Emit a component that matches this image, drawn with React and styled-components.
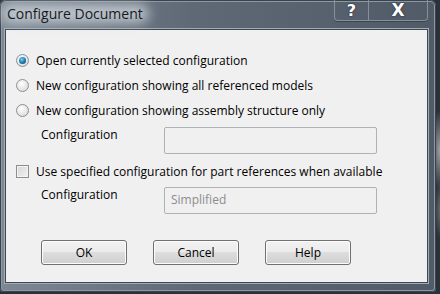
import React from "react";
import styled, { createGlobalStyle } from "styled-components";

const Global = createGlobalStyle`
  html, body {
    margin: 0;
    padding: 0;
    width: 440px;
    height: 294px;
    overflow: hidden;
    background:
      radial-gradient(ellipse 10px 40px at 440px 150px, rgba(255,255,255,0.55), transparent 100%),
      radial-gradient(ellipse 8px 30px at 442px 210px, rgba(255,255,255,0.35), transparent 100%),
      #2b3138;
  }
`;

const Window = styled.div`
  width: 436px;
  height: 292px;
  box-sizing: border-box;
  display: flex;
  flex-direction: column;
  background: linear-gradient(to right, #7d8894 0%, #5e6975 45%, #505b67 100%);
  border-radius: 6px 6px 4px 4px;
  box-shadow: inset 0 0 0 1px #3a434d, inset 0 0 0 2px #8e98a2;
  font-family: "Open Sans", "Noto Sans", sans-serif;
`;

const TitleBar = styled.div`
  height: 29px;
  display: flex;
  align-items: flex-start;
  justify-content: space-between;
  padding: 0 8px 0 7px;
  flex-shrink: 0;
`;

const Title = styled.div`
  position: relative;
  font-family: "Open Sans", sans-serif;
  font-size: 14px;
  color: #151a1f;
  margin-top: 4px;
  &::before {
    content: "";
    position: absolute;
    left: -6px;
    right: -6px;
    top: 0;
    bottom: 0;
    border-radius: 12px;
    background: rgba(214, 220, 226, 0.75);
    filter: blur(6px);
    z-index: 0;
  }
  & > span {
    position: relative;
  }
`;

const Caption = styled.div`
  display: flex;
  height: 20px;
  border: 1px solid #86909b;
  border-top: none;
  border-radius: 0 0 4px 4px;
  box-shadow: 0 1px 0 #3c444d;
`;

const CapButton = styled.div`
  width: ${(p) => p.w}px;
  display: flex;
  align-items: center;
  justify-content: center;
  color: #fff;
  font-family: "DejaVu Sans", sans-serif;
  font-weight: bold;
  font-size: ${(p) => p.size}px;
  line-height: 1;
  padding-top: 1px;
  text-shadow: 0 0 2px #2a3038, 0 0 1px #2a3038;
  & + & {
    border-left: 1px solid #86909b;
  }
`;

const Panel = styled.div`
  flex: 1;
  margin: 0 8px 9px 5px;
  background: #f0f0f0;
  border: 1px solid #3e4852;
  box-shadow: 0 0 0 1px #a3acb5;
  padding: 18px 0 0 10px;
  font-size: 12px;
  color: #000;
  display: flex;
  flex-direction: column;
`;

const Option = styled.label`
  height: 25px;
  display: flex;
  align-items: center;
  gap: 7px;
`;

const Radio = styled.span`
  width: 13px;
  height: 13px;
  box-sizing: border-box;
  border-radius: 50%;
  border: 1px solid #8c8f92;
  background: radial-gradient(circle at 40% 35%, #ffffff 0%, #e4e4e4 60%, #cfcfcf 100%);
  display: flex;
  align-items: center;
  justify-content: center;
  flex-shrink: 0;
  &::after {
    content: "";
    display: ${(p) => (p.checked ? "block" : "none")};
    width: 7px;
    height: 7px;
    border-radius: 50%;
    background: radial-gradient(circle at 40% 35%, #7fd0f4 0%, #1f86bd 45%, #0a3e5e 100%);
  }
`;

const Check = styled.span`
  width: 13px;
  height: 13px;
  box-sizing: border-box;
  border: 1px solid #8c8f92;
  background: linear-gradient(135deg, #d6d6d6 0%, #f2f2f2 100%);
  box-shadow: inset 0 0 0 1px #f4f4f4;
  flex-shrink: 0;
`;

const FieldRow = styled.div`
  display: flex;
  align-items: flex-start;
  margin-top: ${(p) => p.top}px;
  padding-left: 25px;
`;

const FieldLabel = styled.div`
  width: 123px;
  line-height: 16px;
`;

const Input = styled.div`
  width: 213px;
  height: 27px;
  box-sizing: border-box;
  border: 1px solid #adb2b5;
  border-radius: 2px;
  background: #f0f0f0;
  color: #8d8d8d;
  padding: 4px 6px;
  line-height: 16px;
`;

const CheckRow = styled(Option)`
  height: 22px;
  margin-top: 6px;
`;

const Buttons = styled.div`
  display: flex;
  gap: 26px;
  margin-top: 26px;
  padding-left: 25px;
`;

const Button = styled.div`
  width: 86px;
  height: 25px;
  box-sizing: border-box;
  border: 1px solid #707070;
  border-radius: 3px;
  background: linear-gradient(to bottom, #f2f2f2 0%, #ebebeb 49%, #dddddd 50%, #cfcfcf 100%);
  box-shadow: inset 0 0 0 1px #fcfcfc;
  display: flex;
  align-items: center;
  justify-content: center;
`;

export default function App() {
  return (
    <>
      <Global />
      <Window>
        <TitleBar>
          <Title>
            <span>Configure Document</span>
          </Title>
          <Caption>
            <CapButton w={33} size={16}>?</CapButton>
            <CapButton w={58} size={17}>X</CapButton>
          </Caption>
        </TitleBar>
        <Panel>
          <Option>
            <Radio checked />
            Open currently selected configuration
          </Option>
          <Option>
            <Radio />
            New configuration showing all referenced models
          </Option>
          <Option>
            <Radio />
            New configuration showing assembly structure only
          </Option>
          <FieldRow top={4}>
            <FieldLabel>Configuration</FieldLabel>
            <Input />
          </FieldRow>
          <CheckRow>
            <Check />
            Use specified configuration for part references when available
          </CheckRow>
          <FieldRow top={5}>
            <FieldLabel>Configuration</FieldLabel>
            <Input>Simplified</Input>
          </FieldRow>
          <Buttons>
            <Button>OK</Button>
            <Button>Cancel</Button>
            <Button>Help</Button>
          </Buttons>
        </Panel>
      </Window>
    </>
  );
}
